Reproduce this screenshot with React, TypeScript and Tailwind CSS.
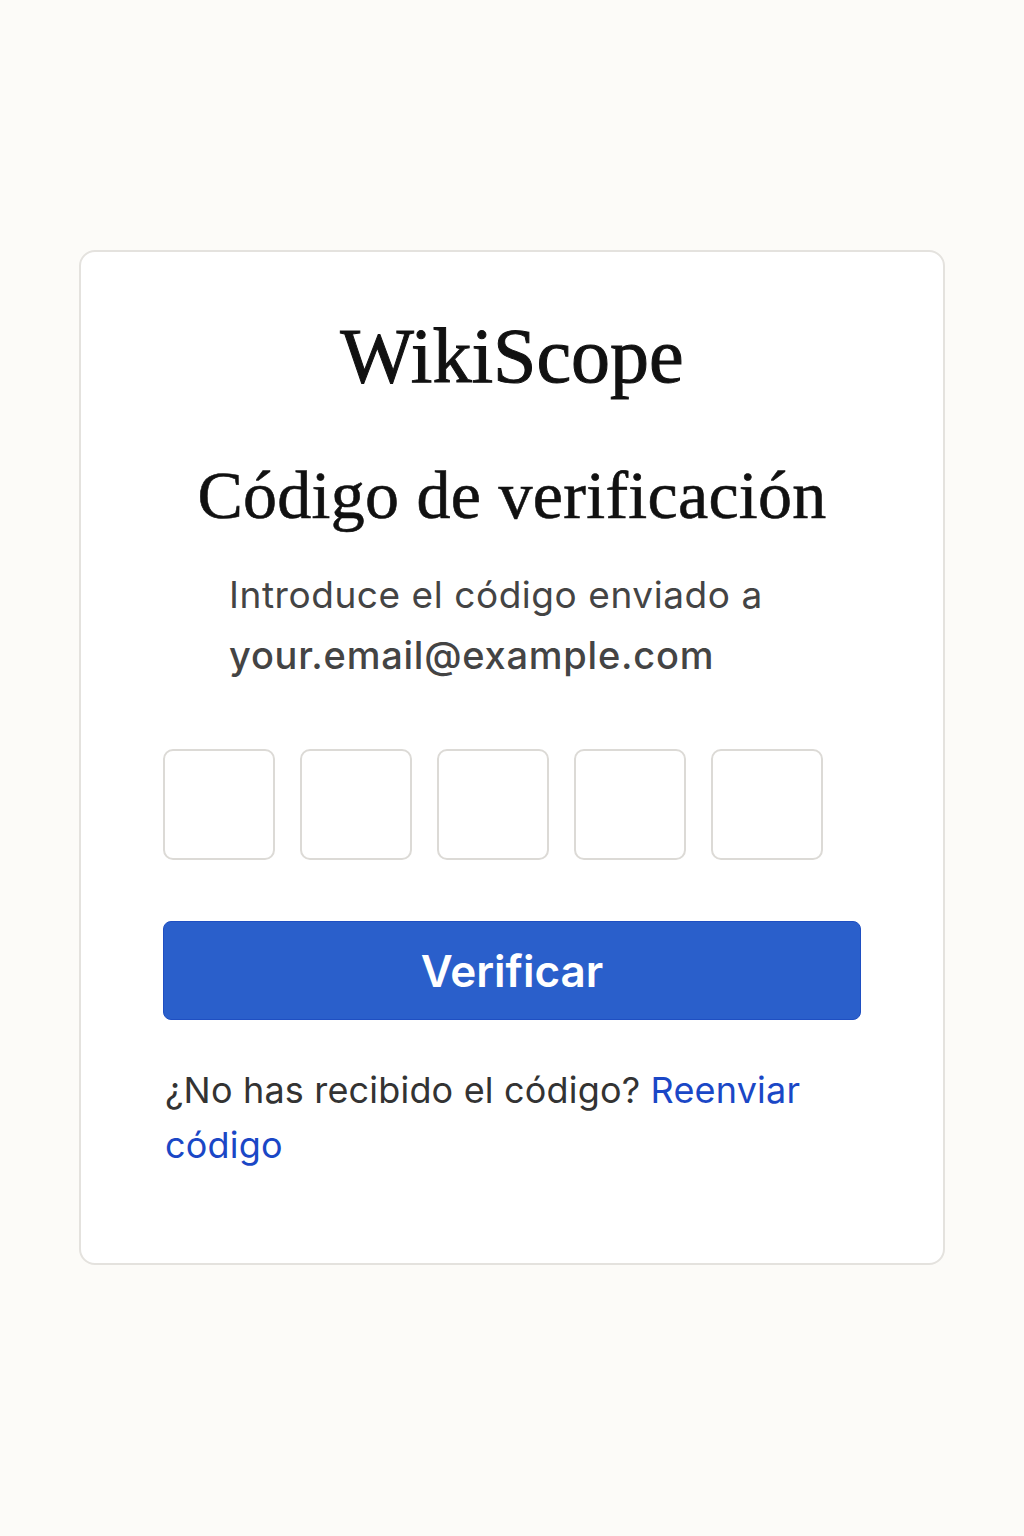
export default function App() {
  const digits = [0, 1, 2, 3, 4];

  return (
    <div className="min-h-[1536px] w-full bg-[#fcfbf8] pt-[250px]">
      <div className="mx-auto w-[866px] rounded-[16px] border-2 border-[#e4e2de] bg-white px-[82px] pt-[65px] pb-[90px]">
        <h1 className="text-center font-['Liberation_Serif',serif] text-[78px] leading-none text-[#111] [-webkit-text-stroke:1px_#111]">
          WikiScope
        </h1>
        <h2 className="mt-[66px] text-center font-['Liberation_Serif',serif] text-[68px] leading-none tracking-[0.004em] text-[#111] [-webkit-text-stroke:0.6px_#111]">
          Código de verificación
        </h2>

        <p className="mt-[36px] ml-[66px] font-['Inter',sans-serif] text-[37px] leading-[60px] tracking-[0.015em] text-[#444]">
          Introduce el código enviado a
          <br />
          <span className="text-[38px] font-medium tracking-[0.02em]">your.email@example.com</span>
        </p>

        <div className="mt-[63px] flex gap-[25px]">
          {digits.map((d) => (
            <input
              key={d}
              maxLength={1}
              className="h-[111px] w-[112px] rounded-[10px] border-2 border-[#dcdad6] bg-white text-center font-['Inter',sans-serif] text-[40px] outline-none"
            />
          ))}
        </div>

        <button className="mt-[61px] h-[99px] w-full rounded-[8px] border border-[#1f4fc2] bg-[#2a5fcb] font-['Inter',sans-serif] text-[44px] font-semibold text-white">
          Verificar
        </button>

        <p className="mt-[43px] ml-[2px] font-['Inter',sans-serif] text-[36px] leading-[55px] tracking-[0.005em] text-[#333]">
          ¿No has recibido el código?{" "}
          <a href="#" className="text-[#1a47c6]">
            Reenviar código
          </a>
        </p>
      </div>
    </div>
  );
}
